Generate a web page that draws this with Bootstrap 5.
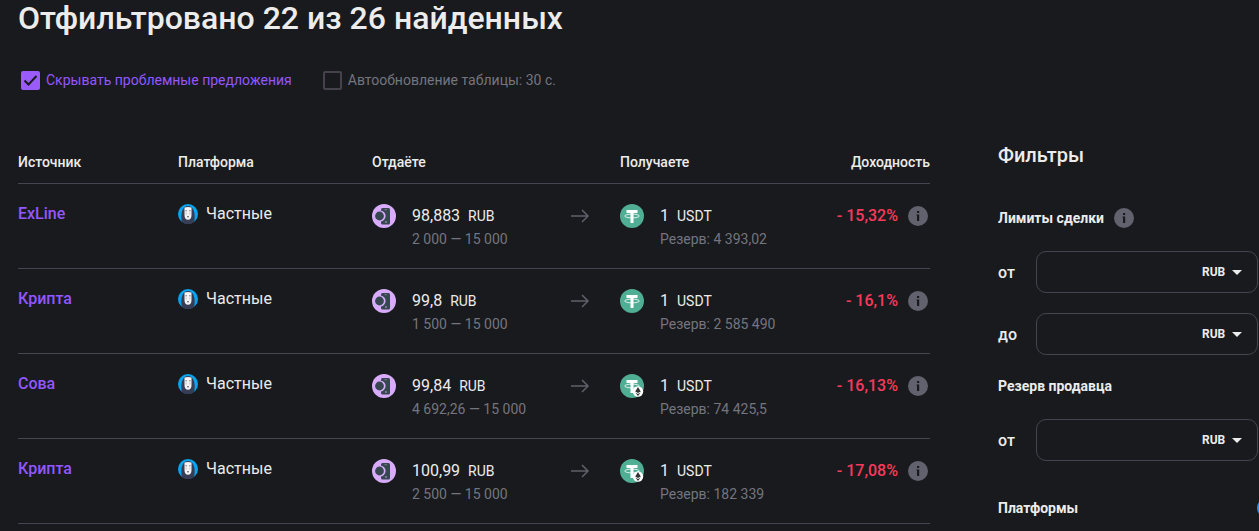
<!DOCTYPE html>
<html lang="ru" data-bs-theme="dark">
<head>
<meta charset="utf-8">
<meta name="viewport" content="width=device-width, initial-scale=1">
<title>Предложения обмена</title>
<link rel="stylesheet" href="https://cdn.jsdelivr.net/npm/bootstrap@5.3.0/dist/css/bootstrap.min.css">
<style>
  :root { --page: #191a1d; --ink: #ececec; --violet: #9257ff; --dim: #74757f; --line: #46444e; --loss: #f9395c; }
  body { background: var(--page); color: var(--ink); font: 400 14px/20px Roboto, sans-serif; overflow-x: hidden; }
  svg { display: block; flex: none; }
  .page-inner { padding-left: 18px; }
  .page-title { font-size: 32px; line-height: 36px; font-weight: 500; color: var(--ink); }
  .options { gap: 31px; padding: 34px 3px 0; }
  .option { gap: 6px; }
  .option .form-check-input { width: 19px; height: 19px; margin: 0; border: 2px solid #46424c; border-radius: 2px; background-color: transparent; }
  .option .form-check-input:checked { background: #9a5cf8 url("data:image/svg+xml,%3Csvg xmlns='http://www.w3.org/2000/svg' viewBox='0 0 19 19'%3E%3Cpath d='M3.5 9.5 7.5 13.5 15.5 5' fill='none' stroke='%23191a1d' stroke-width='2'/%3E%3C/svg%3E") center/19px no-repeat; background-origin: border-box; border-color: #9a5cf8; }
  .violet { color: var(--violet); }
  .dim { color: var(--dim); }
  .columns { gap: 68px; padding-top: 51px; }
  .offers { table-layout: fixed; color: inherit; }
  .offers th, .offers td { padding: 0; border-bottom: 1px solid var(--line); text-align: left; vertical-align: top; }
  .offers th { height: 42px; padding-top: 11px; font-weight: 500; }
  .offers th:last-child { text-align: right; }
  .offers td { height: 85px; padding-top: 20px; }
  .c-source { width: 160px; } .c-platform { width: 194px; } .c-give { width: 198px; } .c-arrow { width: 50px; } .c-get { width: 180px; }
  .name { font-size: 16px; }
  .source { font-weight: 500; }
  .amount { font-size: 16px; margin-right: 8px; }
  .loss { color: var(--loss); font-size: 16px; font-weight: 500; padding-top: 2px; padding-right: 2px; gap: 10px; }
  .money { gap: 16px; }
  .money .sum { margin-top: 2px; }
  .money .limit { margin-top: 3px; }
  .arrow { margin-top: 5px; }
  .filters { width: 261px; }
  .filters h2 { font-size: 20px; line-height: 24px; font-weight: 500; margin: 2px 0 41px; color: var(--ink); }
  .filters h3 { font-size: 14px; line-height: 20px; font-weight: 700; gap: 10px; margin: 21px 0 23px; color: var(--ink); }
  .limit-row { margin: 0 1px 20px 0; }
  .limit-row > label { flex: 0 0 38px; font-size: 16px; font-weight: 500; padding-top: 2px; }
  .limit-box { min-width: 0; height: 42px; border: 1px solid var(--line); border-radius: 10px; padding: 0 15px 0 12px; }
  .limit-box input { min-width: 0; background: none; border: 0; color: inherit; outline: 0; }
  .limit-box select { appearance: none; flex: none; width: 40px; padding: 0; border: 0; color: inherit; font-size: 12px; font-weight: 700; background: url("data:image/svg+xml,%3Csvg xmlns='http://www.w3.org/2000/svg' viewBox='0 0 10 5'%3E%3Cpath d='M0 0h10L5 5z' fill='%23ececec'/%3E%3C/svg%3E") right center/10px 5px no-repeat; }
  .limit-box option { background: var(--page); }
  .platforms { margin-top: 37px; }
  .add { width: 20px; height: 20px; border: 0; border-radius: 50%; background: #2f8cf0; margin-right: -18px; }
</style>
</head>
<body>
<svg class="d-none">
  <symbol id="ghost" viewBox="0 0 20 20"><circle cx="10" cy="10" r="10" fill="#08a4f0"/><path d="M4 18C2.500 13 3 2 10 2s7.500 11 6 16a10 10 0 0 1-12 0z" fill="#383d56"/><path d="M6.500 3.500Q10 2.300 13.500 3.500V11q0 4.800-3.500 4.800T6.500 11z" fill="#f4f4f4"/><path d="M7.500 6.800h1.200M11.300 6.800h1.200M9 12.800h2" stroke="#55586a" stroke-width="1"/><path d="M8.100 8.500v2M11.900 8.500v2" stroke="#aaa" stroke-width=".7"/></symbol>
  <symbol id="phone" viewBox="0 0 24 24"><circle cx="12" cy="12" r="12" fill="#d8acfb"/><rect x="9" y="4" width="9" height="16.500" rx="1.500" fill="#37474f"/><circle cx="8" cy="12" r="5.600" fill="#d8acfb"/><circle cx="7.500" cy="12" r="4.400" fill="#37474f"/><path d="M12.500 5.700h2.500" stroke="#8d82a2" stroke-width=".8"/><circle cx="14" cy="18" r=".8" fill="#d8acfb"/></symbol>
  <symbol id="usdt" viewBox="0 0 24 24"><circle cx="12" cy="12" r="12" fill="#50ae94"/><path d="M6.500 6h11v3h-4v10h-3V9h-4z" fill="#fff"/><ellipse cx="12" cy="12" rx="7.300" ry="1.900" fill="none" stroke="#fff" stroke-width=".8"/></symbol>
  <symbol id="usdt-eth" viewBox="0 0 24 24"><use href="#usdt"/><circle cx="18" cy="17.500" r="5.200" fill="#fff"/><path d="M18 13l2.800 4.400L18 19l-2.800-1.600zM15.300 18.400 18 20l2.700-1.600L18 22z" fill="#343434"/></symbol>
  <symbol id="arrow" viewBox="0 0 20 14"><path d="M1 7h17M12 1l6 6-6 6" fill="none" stroke="#5f606a" stroke-width="1.500"/></symbol>
  <symbol id="info" viewBox="0 0 20 20"><circle cx="10" cy="10" r="10" fill="#61626e"/><path d="M9 5h2.200v2H9zM8.500 8.600h2.700V15H9V9.600h-.5z" fill="#191a1d"/></symbol>
</svg>

<div class="page-inner">
  <h1 class="page-title m-0">Отфильтровано 22 из 26 найденных</h1>
  <div class="options d-flex">
    <div class="option d-flex align-items-center violet">
      <input class="form-check-input" type="checkbox" id="hide" checked><label for="hide">Скрывать проблемные предложения</label>
    </div>
    <div class="option d-flex align-items-center dim">
      <input class="form-check-input" type="checkbox" id="auto"><label for="auto">Автообновление таблицы: 30 с.</label>
    </div>
  </div>

  <div class="columns d-flex align-items-start">
    <main class="flex-grow-1">
      <table class="offers w-100 mb-0">
        <colgroup><col class="c-source"><col class="c-platform"><col class="c-give"><col class="c-arrow"><col class="c-get"><col></colgroup>
        <thead><tr><th>Источник</th><th>Платформа</th><th colspan="2">Отдаёте</th><th>Получаете</th><th>Доходность</th></tr></thead>
        <tbody id="rows"></tbody>
      </table>
    </main>

    <aside class="filters flex-shrink-0">
      <h2>Фильтры</h2>
      <h3 class="d-flex align-items-center">Лимиты сделки <svg width="20" height="20"><use href="#info"/></svg></h3>
      <div class="limit-row d-flex align-items-center">
        <label for="from">от</label>
        <div class="limit-box d-flex align-items-center flex-grow-1"><input class="flex-grow-1" id="from" type="text"><select aria-label="Валюта"><option>RUB</option><option>USDT</option></select></div>
      </div>
      <div class="limit-row d-flex align-items-center">
        <label for="to">до</label>
        <div class="limit-box d-flex align-items-center flex-grow-1"><input class="flex-grow-1" id="to" type="text"><select aria-label="Валюта"><option>RUB</option><option>USDT</option></select></div>
      </div>
      <h3>Резерв продавца</h3>
      <div class="limit-row d-flex align-items-center">
        <label for="reserve">от</label>
        <div class="limit-box d-flex align-items-center flex-grow-1"><input class="flex-grow-1" id="reserve" type="text"><select aria-label="Валюта"><option>RUB</option><option>USDT</option></select></div>
      </div>
      <div class="platforms d-flex align-items-center justify-content-between">
        <h3 class="m-0">Платформы</h3><button class="add p-0" type="button" aria-label="Выбрать платформы"></button>
      </div>
    </aside>
  </div>
</div>

<script>
  const offers = [
    ["ExLine", "98,883", "2 000 — 15 000", "usdt", "4 393,02", "15,32"],
    ["Крипта", "99,8", "1 500 — 15 000", "usdt", "2 585 490", "16,1"],
    ["Сова", "99,84", "4 692,26 — 15 000", "usdt-eth", "74 425,5", "16,13"],
    ["Крипта", "100,99", "2 500 — 15 000", "usdt-eth", "182 339", "17,08"]
  ];
  const icon = (id, w, h, cls = "") => `<svg class="${cls}" width="${w}" height="${h}"><use href="#${id}"/></svg>`;
  const money = (id, sum, unit, note) => `<div class="money d-flex">${icon(id, 24, 24)}<div><div class="sum"><span class="amount">${sum}</span>${unit}</div><div class="limit dim">${note}</div></div></div>`;
  document.getElementById("rows").innerHTML = offers.map(([name, rate, limits, coin, reserve, loss]) => `<tr>
    <td><a href="#" class="name source violet text-decoration-none">${name}</a></td>
    <td><div class="name d-flex gap-2">${icon("ghost", 20, 20)}Частные</div></td>
    <td>${money("phone", rate, "RUB", limits)}</td>
    <td>${icon("arrow", 20, 14, "arrow")}</td>
    <td>${money(coin, "1", "USDT", "Резерв: " + reserve)}</td>
    <td><div class="loss d-flex align-items-center justify-content-end">- ${loss}% ${icon("info", 20, 20)}</div></td>
  </tr>`).join("");
</script>
<script src="https://cdn.jsdelivr.net/npm/bootstrap@5.3.0/dist/js/bootstrap.bundle.min.js"></script>
</body>
</html>
